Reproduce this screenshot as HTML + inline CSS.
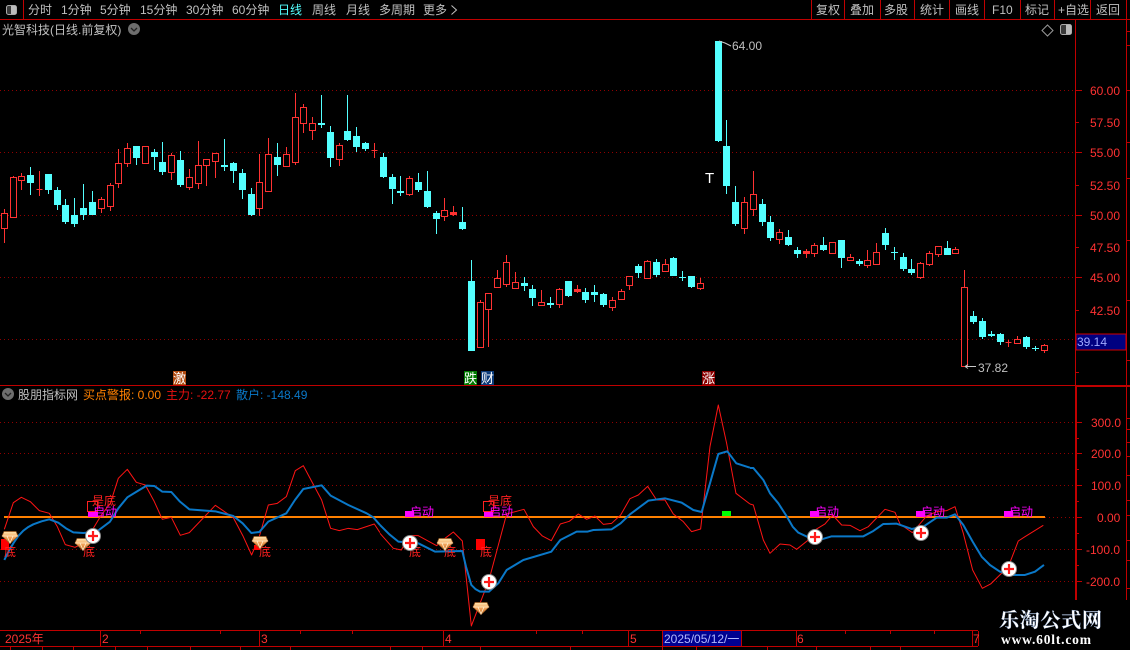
<!DOCTYPE html>
<html lang="zh"><head><meta charset="utf-8"><title>光智科技</title>
<style>
html,body{margin:0;padding:0;background:#000;width:1130px;height:650px;overflow:hidden}
svg{display:block;position:absolute;left:0;top:0}
text{font-family:"Liberation Sans","WenQuanYi Zen Hei","Noto Sans CJK SC",sans-serif;font-size:12px}
.m{fill:#c0c0c0}
.p{fill:#ff3232}
.q{fill:#ff00ff;font-size:12px}
.d{fill:#ff2020;font-size:12px}
</style></head><body>
<svg width="1130" height="650" viewBox="0 0 1130 650" xmlns="http://www.w3.org/2000/svg">
<defs>
<linearGradient id="dg" x1="0" y1="0" x2="0" y2="1"><stop offset="0" stop-color="#ffe6b0"/><stop offset=".45" stop-color="#f5a860"/><stop offset="1" stop-color="#c86a20"/></linearGradient>
<g id="gem"><path d="M-6-5.5H6L8-1 0 6.5-8-1Z" fill="url(#dg)" stroke="#9a5a20" stroke-width=".7"/><path d="M-8-1H8M-3-1 0 6 3-1" fill="none" stroke="#fff0d0" stroke-width=".8"/></g>
<g id="pl"><circle r="7.5" fill="#fff" stroke="#8a8a8a" stroke-width="1"/><path d="M-5 0H5M0-5V5" stroke="#ff1a1a" stroke-width="2.2"/></g>
</defs>
<rect width="1130" height="650" fill="#000"/>

<!-- grid -->
<g stroke="#900000" stroke-width="1" stroke-dasharray="1 3" shape-rendering="crispEdges">
<path d="M0 90.5H1075M0 152.5H1075M0 215.5H1075M0 277.5H1075M0 339.5H1075"/>
<path d="M0 422.5H1075M0 453.5H1075M0 485.5H1075M1045 517.5H1075M0 549.5H1075M0 581.5H1075"/>
</g>

<!-- frame -->
<g stroke="#c00000" stroke-width="1" fill="none" shape-rendering="crispEdges">
<path d="M0 19.5H1130M23.5 0V19M811.5 0V19M844.5 0V19M880.5 0V19M914.5 0V19M949.5 0V19M984.5 0V19M1020.5 0V19M1054.5 0V19M1090.5 0V19"/>
<path d="M0 385.5H1076"/>
<path d="M1075.5 19V600M1126.5 0V600"/>
<path d="M1076 386.5H1130M1076 385.5H1130M1076.5 386V600"/>
<path d="M0 630.5H978M0 646.5H978M978.5 631V646M100.5 631V646M259.5 631V646M443.5 631V646M628.5 631V646M662.5 631V646M741.5 631V646M796.5 631V646M972.5 631V646"/>
<path d="M140.5 631V634M220.5 631V634M300.5 631V634M352.5 631V634M536.5 631V634M582.5 631V634M845.5 631V634M890.5 631V634M934.5 631V634"/>
<path d="M10.5 646V650M42.5 646V650M73.5 646V650M115.5 646V650M147.5 646V650M190.5 646V650M240.5 646V650M290.5 646V650M390.5 646V650M422.5 646V650M480.5 646V650M570.5 646V650M662.5 646V650M696.5 646V650M767.5 646V650M816.5 646V650M870.5 646V650M900.5 646V650"/>
<path d="M1076 90.5H1082M1076 122.5H1079M1076 152.5H1082M1076 185.5H1079M1076 215.5H1082M1076 247.5H1079M1076 277.5H1082M1076 310.5H1079M1076 339.5H1082M1076 372.5H1079"/>
<path d="M1076 422.5H1082M1076 438.5H1079M1076 453.5H1082M1076 469.5H1079M1076 485.5H1082M1076 501.5H1079M1076 517.5H1082M1076 533.5H1079M1076 549.5H1082M1076 565.5H1079M1076 581.5H1082"/>
<path d="M1127 31.5H1130M1127 45.5H1130M1127 90.5H1130M1127 142.5H1130M1127 178.5H1130M1127 240.5H1130M1127 300.5H1130M1127 360.5H1130M1127 418.5H1130M1127 429.5H1130M1127 442.5H1130M1127 456.5H1130M1127 475.5H1130M1127 500.5H1130M1127 515.5H1130M1127 540.5H1130M1127 560.5H1130M1127 588.5H1130"/>
</g>

<!-- current price box -->
<rect x="1076" y="334" width="50" height="16" fill="#000080" stroke="#d00000" stroke-width="1" shape-rendering="crispEdges"/>

<!-- date box -->
<rect x="663" y="631" width="78" height="15" fill="#000090"/>

<!-- red wicks -->
<path shape-rendering="crispEdges" fill="none" stroke="#ff3232" stroke-width="1" d="M4.5 209V243M13.5 176V217M21.5 173V190M39.5 171V196M101.5 197V213M110.5 183V211M118.5 149V188M127.5 143V167M145.5 146V163M171.5 153V180M189.5 169V190M198.5 141V189M206.5 159V186M215.5 153V178M259.5 154V216M268.5 138V191M286.5 147V167M295.5 93V165M303.5 104V133M312.5 117V140M339.5 143V166M374.5 143V158M409.5 176V196M444.5 198V221M453.5 206V216M480.5 300V347M488.5 293V347M497.5 270V287M506.5 255V287M515.5 272V289M541.5 290V305M559.5 288V308M577.5 285V293M612.5 297V311M621.5 289V299M629.5 276V290M647.5 260V279M665.5 259V271M700.5 278V290M744.5 197V234M753.5 171V216M779.5 229V244M806.5 249V258M814.5 243V257M832.5 242V253M850.5 254V261M867.5 250V268M876.5 243V264M920.5 262V279M929.5 251V266M938.5 246V257M955.5 247V254M964.5 270V366M1008.5 340V347M1017.5 336V344M1044.5 344V353"/>
<!-- red bodies -->
<path shape-rendering="crispEdges" fill="#000" stroke="#ff3232" stroke-width="1" d="M1.5 213.5h6v15h-6zM10.5 177.5h6v40h-6zM18.5 176.5h6v4h-6zM36.5 189.5h6v0h-6zM98.5 199.5h6v9h-6zM107.5 185.5h6v21h-6zM115.5 163.5h6v20h-6zM124.5 148.5h6v15h-6zM142.5 146.5h6v17h-6zM168.5 155.5h6v17h-6zM186.5 177.5h6v10h-6zM195.5 165.5h6v18h-6zM203.5 159.5h6v6h-6zM212.5 153.5h6v8h-6zM256.5 182.5h6v26h-6zM265.5 154.5h6v37h-6zM283.5 154.5h6v12h-6zM292.5 117.5h6v45h-6zM300.5 107.5h6v16h-6zM309.5 123.5h6v7h-6zM336.5 145.5h6v14h-6zM371.5 150.5h6v0h-6zM406.5 178.5h6v16h-6zM441.5 210.5h6v6h-6zM450.5 212.5h6v2h-6zM477.5 302.5h6v45h-6zM485.5 293.5h6v16h-6zM494.5 278.5h6v9h-6zM503.5 262.5h6v22h-6zM512.5 282.5h6v6h-6zM538.5 302.5h6v3h-6zM556.5 289.5h6v15h-6zM574.5 289.5h6v2h-6zM609.5 300.5h6v7h-6zM618.5 291.5h6v8h-6zM626.5 276.5h6v9h-6zM644.5 261.5h6v17h-6zM662.5 264.5h6v7h-6zM697.5 283.5h6v5h-6zM741.5 202.5h6v26h-6zM750.5 194.5h6v15h-6zM776.5 232.5h6v7h-6zM803.5 251.5h6v2h-6zM811.5 245.5h6v8h-6zM829.5 242.5h6v11h-6zM847.5 257.5h6v3h-6zM864.5 260.5h6v5h-6zM873.5 252.5h6v12h-6zM917.5 263.5h6v14h-6zM926.5 253.5h6v11h-6zM935.5 246.5h6v8h-6zM952.5 249.5h6v4h-6zM961.5 287.5h6v79h-6zM1005.5 342.5h6v0h-6zM1014.5 339.5h6v4h-6zM1041.5 345.5h6v5h-6z"/>
<path shape-rendering="crispEdges" fill="#ff3232" d="M574 289h7v3h-7zM450 212h7v3h-7zM803 251h7v3h-7z"/>

<!-- cyan wicks -->
<path shape-rendering="crispEdges" fill="none" stroke="#54ffff" stroke-width="1" d="M30.5 167V195M48.5 174V194M57.5 187V210M65.5 199V224M74.5 198V227M83.5 184V220M92.5 191V215M136.5 146V165M154.5 149V170M162.5 142V175M180.5 151V187M224.5 139V171M233.5 162V183M242.5 169V199M251.5 188V216M277.5 143V176M321.5 95V128M330.5 126V167M347.5 95V141M356.5 127V152M365.5 142V151M383.5 153V178M392.5 174V204M400.5 176V196M418.5 173V192M427.5 171V208M436.5 211V234M462.5 207V230M471.5 260V351M524.5 277V291M532.5 285V306M550.5 297V308M568.5 281V297M585.5 288V303M594.5 285V302M603.5 293V307M638.5 264V278M656.5 259V277M673.5 257V276M682.5 271V281M691.5 276V288M718.5 41V142M726.5 120V194M735.5 186V226M762.5 199V226M770.5 216V241M788.5 230V246M797.5 247V258M823.5 237V251M841.5 240V268M859.5 259V266M885.5 228V250M894.5 247V260M903.5 253V271M911.5 259V275M947.5 241V255M973.5 311V324M982.5 318V339M991.5 331V337M1000.5 333V345M1026.5 336V349M1035.5 346V351"/>
<!-- cyan bodies -->
<path shape-rendering="crispEdges" fill="#54ffff" d="M27 175h7v8h-7zM45 174h7v16h-7zM54 190h7v15h-7zM62 205h7v17h-7zM71 215h7v9h-7zM80 208h7v7h-7zM89 202h7v13h-7zM133 146h7v12h-7zM151 152h7v5h-7zM159 162h7v10h-7zM177 160h7v25h-7zM221 165h7v2h-7zM230 163h7v8h-7zM239 173h7v17h-7zM248 194h7v21h-7zM274 157h7v8h-7zM318 123h7v2h-7zM327 132h7v26h-7zM344 131h7v9h-7zM353 136h7v11h-7zM362 143h7v6h-7zM380 157h7v20h-7zM389 177h7v12h-7zM397 191h7v2h-7zM415 182h7v8h-7zM424 191h7v16h-7zM433 213h7v6h-7zM459 222h7v7h-7zM468 281h7v70h-7zM521 283h7v3h-7zM529 289h7v9h-7zM547 303h7v2h-7zM565 281h7v15h-7zM582 292h7v8h-7zM591 292h7v3h-7zM600 294h7v11h-7zM635 266h7v7h-7zM653 262h7v13h-7zM670 258h7v18h-7zM679 277h7v1h-7zM688 276h7v11h-7zM715 41h7v100h-7zM723 146h7v40h-7zM732 202h7v22h-7zM759 204h7v18h-7zM767 222h7v16h-7zM785 237h7v8h-7zM794 250h7v4h-7zM820 245h7v5h-7zM838 240h7v18h-7zM856 261h7v3h-7zM882 233h7v12h-7zM891 252h7v1h-7zM900 257h7v12h-7zM908 269h7v4h-7zM944 248h7v7h-7zM970 316h7v6h-7zM979 321h7v16h-7zM988 334h7v2h-7zM997 334h7v8h-7zM1023 337h7v10h-7zM1032 348h7v1h-7z"/>

<!-- hi / lo callouts -->
<path d="M719 41 725 43 731 46" fill="none" stroke="#c8c8c8" stroke-width="1"/>
<path d="M965 366.5H976M965 366.5 968 364.5M965 366.5 968 368.5" fill="none" stroke="#c8c8c8" stroke-width="1"/>
<text class="m" x="732" y="50">64.00</text>
<text class="m" x="978" y="372">37.82</text>
<text x="705" y="183" fill="#fff" style="font-size:15px">T</text>

<!-- tags -->
<rect x="173" y="371" width="13" height="14" fill="#b04a10"/><text x="173" y="383" fill="#fff" style="font-size:13px">激</text>
<rect x="464" y="371" width="13" height="14" fill="#007a00"/><text x="464" y="383" fill="#fff" style="font-size:13px">跌</text>
<rect x="481" y="371" width="13" height="14" fill="#0a3a78"/><text x="481" y="383" fill="#fff" style="font-size:13px">财</text>
<rect x="702" y="371" width="13" height="14" fill="#8a0000"/><text x="702" y="383" fill="#fff" style="font-size:13px">涨</text>

<!-- indicator lines -->
<path d="M4 517H1045" stroke="#ff8000" stroke-width="2" shape-rendering="crispEdges"/>

<g fill="none" stroke="#ff1414" stroke-width="1" stroke-linejoin="round">
<polyline transform="translate(0 380) scale(.3333)" vector-effect="non-scaling-stroke" points="13,448 40,368 64,352 91,365 118,392 148,400 172,440 196,494 225,502 250,490 277,450 304,405 331,370 355,295 382,268 409,307 436,315 463,365 487,418 514,412 541,466 568,458 646,376 700,413 730,470 755,525 778,470 805,375 832,370 859,350 886,272 910,257 965,360 992,445 1018,452 1045,445 1072,449 1123,432 1140,458"/>
<polyline transform="translate(380 380) scale(.3333)" vector-effect="non-scaling-stroke" points="0,460 40,505 64,510 88,467 115,467 170,497 195,475 220,456 247,483 274,738 327,600 380,402 432,388 460,440 487,468 514,482 541,432 568,424 595,402 620,418 645,408 670,433 695,430 722,405 750,356 775,345 803,319 830,360 855,360 880,402 910,425 935,455 962,447 990,200 1015,75 1040,190 1068,340 1110,372"/>
<polyline transform="translate(750 380) scale(.3333)" vector-effect="non-scaling-stroke" points="0,372 10,375 40,480 60,520 90,492 120,495 140,508 175,480 195,450 225,432 248,405 275,435 300,436 330,452 355,440 405,388 435,397 450,432 487,458 530,408 560,395 590,392 615,380 640,460 668,570 697,625 722,612 775,560 805,483 825,470 880,436"/>
</g>
<g fill="none" stroke="#0a78c8" stroke-width="2" stroke-linejoin="round">
<polyline transform="translate(0 380) scale(.3333)" vector-effect="non-scaling-stroke" points="13,540 27,512 40,490 55,468 70,452 85,441 100,433 125,424 148,418 175,428 198,445 220,457 250,459 290,455 330,425 355,385 382,352 410,335 440,317 463,318 487,335 514,336 540,365 568,388 646,394 700,408 728,430 754,459 778,456 805,425 859,400 885,360 910,327 965,316 992,347 1045,375 1100,400 1120,412 1140,435"/>
<polyline transform="translate(380 380) scale(.3333)" vector-effect="non-scaling-stroke" points="0,435 28,463 55,485 115,490 165,515 247,513 258,560 274,615 286,627 300,635 327,635 355,610 380,570 430,540 514,515 541,480 590,455 622,455 640,450 695,448 722,430 750,403 805,362 855,355 905,368 940,390 965,396 990,310 1015,222 1042,214 1069,250 1110,263"/>
<polyline transform="translate(750 380) scale(.3333)" vector-effect="non-scaling-stroke" points="0,264 10,264 40,300 60,340 85,370 112,412 128,440 145,458 175,472 215,478 245,469 340,469 370,453 400,432 440,431 485,447 520,440 560,413 590,413 615,403 640,435 668,485 695,530 720,555 750,575 790,585 825,585 855,575 882,555"/>
</g>

<!-- magenta squares & labels -->
<g fill="#ff00ff" shape-rendering="crispEdges">
<rect x="88" y="511" width="10" height="6"/><rect x="405" y="511" width="9" height="6"/><rect x="484" y="511" width="9" height="6"/><rect x="810" y="511" width="9" height="6"/><rect x="916" y="511" width="9" height="6"/><rect x="1004" y="511" width="9" height="6"/>
</g>
<rect x="87.5" y="501.5" width="10" height="10" fill="none" stroke="#ff2020" stroke-width="1" shape-rendering="crispEdges"/>
<rect x="483.5" y="501.5" width="10" height="10" fill="none" stroke="#ff2020" stroke-width="1" shape-rendering="crispEdges"/>
<text class="d" x="92" y="505">是底</text>
<text class="d" x="488" y="505">是底</text>
<text class="q" x="93" y="516">启动</text>
<text class="q" x="410" y="516">启动</text>
<text class="q" x="489" y="516">启动</text>
<text class="q" x="815" y="516">启动</text>
<text class="q" x="921" y="516">启动</text>
<text class="q" x="1009" y="516">启动</text>

<!-- red squares and 底 -->
<g fill="#ff0000" shape-rendering="crispEdges">
<rect x="1" y="539" width="8" height="11"/><rect x="254" y="545" width="6" height="5"/><rect x="476" y="539" width="9" height="11"/>
</g>
<text class="d" x="4" y="556">底</text>
<text class="d" x="83" y="556">底</text>
<text class="d" x="259" y="556">底</text>
<text class="d" x="409" y="556">底</text>
<text class="d" x="444" y="556">底</text>
<text class="d" x="480" y="556">底</text>

<!-- gems -->
<use href="#gem" x="10" y="537"/>
<use href="#gem" x="83" y="544"/>
<use href="#gem" x="260" y="542"/>
<use href="#gem" x="445" y="544"/>
<use href="#gem" x="481" y="608"/>

<!-- green -->
<rect x="722" y="511" width="9" height="5" fill="#00ff00" shape-rendering="crispEdges"/>

<!-- plus -->
<use href="#pl" x="93" y="536"/>
<use href="#pl" x="410" y="543"/>
<use href="#pl" x="489" y="582"/>
<use href="#pl" x="815" y="537"/>
<use href="#pl" x="921" y="533"/>
<use href="#pl" x="1009" y="569"/>

<!-- toolbar -->
<rect x="6.5" y="5.5" width="10" height="9" rx="2" fill="#3a3a3a" stroke="#aaa" stroke-width="1"/><rect x="11" y="6" width="5" height="8" fill="#bbb"/>
<text class="m" x="28" y="14">分时</text>
<text class="m" x="61" y="14">1分钟</text>
<text class="m" x="100" y="14">5分钟</text>
<text class="m" x="140" y="14">15分钟</text>
<text class="m" x="186" y="14">30分钟</text>
<text class="m" x="232" y="14">60分钟</text>
<text x="278" y="14" fill="#54ffff">日线</text>
<text class="m" x="312" y="14">周线</text>
<text class="m" x="346" y="14">月线</text>
<text class="m" x="379" y="14">多周期</text>
<text class="m" x="423" y="14">更多</text>
<path d="M451.5 5.5 456.5 10 451.5 14.5" fill="none" stroke="#c0c0c0" stroke-width="1"/>
<text class="m" x="816" y="14">复权</text>
<text class="m" x="850" y="14">叠加</text>
<text class="m" x="884" y="14">多股</text>
<text class="m" x="920" y="14">统计</text>
<text class="m" x="955" y="14">画线</text>
<text class="m" x="992" y="14">F10</text>
<text class="m" x="1025" y="14">标记</text>
<text class="m" x="1058" y="14">+自选</text>
<text class="m" x="1096" y="14">返回</text>

<!-- title -->
<text class="m" x="2" y="34">光智科技(日线.前复权)</text>
<circle cx="134" cy="29" r="6" fill="#6e6e6e"/><path d="M131 28 134 31 137 28" fill="none" stroke="#222" stroke-width="1.3"/>
<path d="M1047.5 25 1053 30.5 1047.5 36 1042 30.5Z" fill="none" stroke="#9a9a9a"/>
<rect x="1060.5" y="24.5" width="11" height="10" rx="2" fill="#3a3a3a" stroke="#aaa"/><rect x="1066" y="25" width="5" height="9" fill="#bbb"/>

<!-- price labels -->
<text class="p" x="1090" y="95">60.00</text>
<text class="p" x="1090" y="127">57.50</text>
<text class="p" x="1090" y="157">55.00</text>
<text class="p" x="1090" y="190">52.50</text>
<text class="p" x="1090" y="220">50.00</text>
<text class="p" x="1090" y="252">47.50</text>
<text class="p" x="1090" y="282">45.00</text>
<text class="p" x="1090" y="315">42.50</text>
<text x="1077" y="346" fill="#a0a8ff">39.14</text>

<!-- indicator title -->
<circle cx="8" cy="394" r="6" fill="#6e6e6e"/><path d="M5 393 8 396 11 393" fill="none" stroke="#222" stroke-width="1.3"/>
<text class="m" x="18" y="399">股朋指标网</text>
<text x="83" y="399" fill="#ff8000">买点警报: 0.00</text>
<text x="166" y="399" fill="#e81010">主力: -22.77</text>
<text x="236" y="399" fill="#0a78c8">散户: -148.49</text>

<!-- indicator scale -->
<text class="p" x="1091" y="427">300.0</text>
<text class="p" x="1091" y="458">200.0</text>
<text class="p" x="1091" y="490">100.0</text>
<text class="p" x="1097" y="522">0.00</text>
<text class="p" x="1086" y="554">-100.0</text>
<text class="p" x="1086" y="586">-200.0</text>

<!-- date strip -->
<text class="p" x="5" y="643">2025年</text>
<text class="p" x="102" y="643">2</text>
<text class="p" x="261" y="643">3</text>
<text class="p" x="445" y="643">4</text>
<text class="p" x="630" y="643">5</text>
<text x="664" y="643" fill="#b0b8ff">2025/05/12/一</text>
<text class="p" x="797" y="643">6</text>
<text class="p" x="973" y="643">7</text>

<!-- watermark -->
<rect x="979" y="600" width="151" height="50" fill="#000"/>
<text x="999" y="627" fill="#fff" stroke="#7a96c0" stroke-width=".3" textLength="103" lengthAdjust="spacing" style='font-family:"Liberation Serif","Noto Serif CJK SC",serif;font-size:20px;font-weight:700'>乐淘公式网</text>
<text x="1001" y="644" fill="#fff" textLength="90" lengthAdjust="spacing" style='font-family:"Liberation Serif",serif;font-size:13.5px;font-weight:700'>www.60lt.com</text>
</svg>
</body></html>
